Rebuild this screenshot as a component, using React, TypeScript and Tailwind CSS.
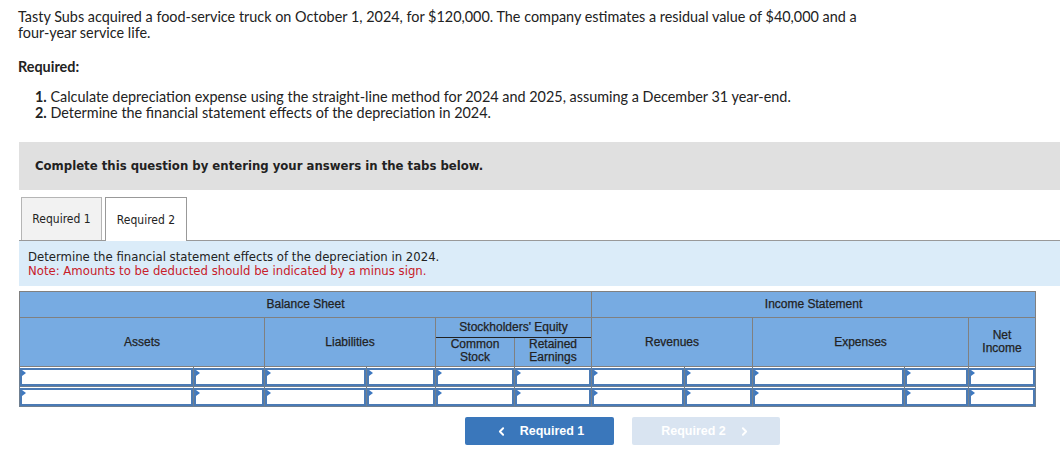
import React from "react";
import { ChevronLeft, ChevronRight } from "lucide-react";

const body = "font-['Lato','Open_Sans',sans-serif]";
const verdana = "font-['DejaVu_Sans_Condensed','DejaVu_Sans',sans-serif]";
const arial = "font-['Liberation_Sans','Arial',sans-serif]";

const cols = [174, 71, 102, 69, 79, 77, 93, 68, 152, 64, 67];

function InputCell() {
  return (
    <td className="h-[20px] border border-[#6f7f90] p-0">
      <div className="relative h-[18px] border-2 border-[#4b7bb5] bg-white">
        <span className="absolute left-0 top-0 h-0 w-0 border-y-[3px] border-l-[4px] border-y-transparent border-l-[#3d78c0]" />
      </div>
    </td>
  );
}

function DataRow() {
  return (
    <tr>
      {cols.map((_, i) => (
        <InputCell key={i} />
      ))}
    </tr>
  );
}

const th = "border border-[#808080] font-normal [-webkit-text-stroke:0.25px]";

export default function App() {
  return (
    <div className="h-[476px] w-[1060px] overflow-hidden bg-white text-[#222]">
      <div className={`${body} px-[18px] pt-[9px] text-[14.4px] leading-[16px]`}>
        <p className="w-[850px]">
          Tasty Subs acquired a food-service truck on October 1, 2024, for $120,000. The company estimates a residual value of $40,000 and a
          four-year service life.
        </p>
        <p className="mt-[18px] font-bold">Required:</p>
        <ol className="mt-[14px] pl-[17px]">
          <li>
            <b>1.</b> Calculate depreciation expense using the straight-line method for 2024 and 2025, assuming a December 31 year-end.
          </li>
          <li>
            <b>2.</b> Determine the financial statement effects of the depreciation in 2024.
          </li>
        </ol>
      </div>

      <div className={`${verdana} ml-[19px] mt-[21px] flex h-[48px] items-center bg-[#e0e0e0] pl-[16px] text-[13px] font-bold`}>
        Complete this question by entering your answers in the tabs below.
      </div>

      <div className={`${verdana} ml-[19px] mt-[6px] flex items-end border-b border-[#999] text-[12px]`}>
        <div className="ml-[2px] flex h-[43px] w-[81px] items-center justify-center border border-b-0 border-[#b5b5b5] bg-[#f2f2f2]">
          Required 1
        </div>
        <div className="relative top-px ml-[3px] flex h-[44px] w-[82px] items-center justify-center border border-b-0 border-[#999] bg-white">
          Required 2
        </div>
      </div>

      <div className={`${verdana} ml-[19px] h-[45px] bg-[#dbecf9] pl-[9px] pt-[9px] text-[13px] leading-[14px]`}>
        <div className="text-[#222]">Determine the financial statement effects of the depreciation in 2024.</div>
        <div className="text-[#c8202a]">Note: Amounts to be deducted should be indicated by a minus sign.</div>
      </div>

      <table className={`${arial} ml-[19px] mt-[5px] w-[1016px] table-fixed border-collapse text-[12px] leading-[13px] text-[#222]`}>
        <colgroup>
          {cols.map((w, i) => (
            <col key={i} style={{ width: w }} />
          ))}
        </colgroup>
        <thead>
          <tr className="h-[26px] bg-[#77abe2]">
            <th colSpan={6} className={th}>
              Balance Sheet
            </th>
            <th colSpan={5} className={th}>
              Income Statement
            </th>
          </tr>
          <tr className="h-[49px] bg-[#77abe2]">
            <th colSpan={2} className={th}>
              Assets
            </th>
            <th colSpan={2} className={th}>
              Liabilities
            </th>
            <th colSpan={2} className={`${th} p-0`}>
              <div className="flex h-[47px] flex-col">
                <div className="flex h-[21px] items-center justify-center border-b border-[#222]">Stockholders' Equity</div>
                <div className="flex flex-1">
                  <div className="flex w-[79px] items-center justify-center border-r border-[#808080] pb-[2px]">
                    Common
                    <br />
                    Stock
                  </div>
                  <div className="flex flex-1 items-center justify-center pb-[2px]">
                    Retained
                    <br />
                    Earnings
                  </div>
                </div>
              </div>
            </th>
            <th colSpan={2} className={th}>
              Revenues
            </th>
            <th colSpan={2} className={th}>
              Expenses
            </th>
            <th className={th}>
              Net
              <br />
              Income
            </th>
          </tr>
        </thead>
        <tbody>
          <DataRow />
          <DataRow />
        </tbody>
      </table>

      <div className={`${arial} mt-[10px] flex gap-[18px] pl-[465px] text-[12.5px] font-bold`}>
        <button type="button" className="flex h-[28px] w-[149px] items-center justify-center gap-[12px] rounded-[2px] bg-[#3a77bb] text-white">
          <ChevronLeft className="size-[13px]" strokeWidth={3.5} />
          Required 1
        </button>
        <button type="button" className="flex h-[28px] w-[148px] items-center justify-center gap-[12px] rounded-[2px] bg-[#d9e4f1] text-white">
          Required 2
          <ChevronRight className="size-[13px]" strokeWidth={3.5} />
        </button>
      </div>
    </div>
  );
}
